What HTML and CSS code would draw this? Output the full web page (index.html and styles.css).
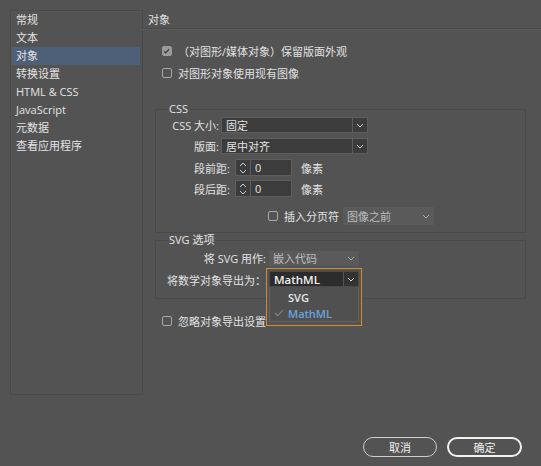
FILE: index.html
```html
<!DOCTYPE html>
<html lang="zh-CN">
<head>
<meta charset="utf-8">
<title>导出选项</title>
<link rel="stylesheet" href="styles.css">
</head>
<body>
<div class="dialog">
  <div class="main">
    <nav class="sidebar">
      <div class="nav-item">常规</div>
      <div class="nav-item">文本</div>
      <div class="nav-item active">对象</div>
      <div class="nav-item">转换设置</div>
      <div class="nav-item">HTML &amp; CSS</div>
      <div class="nav-item">JavaScript</div>
      <div class="nav-item">元数据</div>
      <div class="nav-item">查看应用程序</div>
    </nav>
    <section class="content">
      <div class="title">对象</div>
      <div class="checks">
        <label class="check"><span class="box checked"><svg viewBox="0 0 10 10" width="10" height="10"><path d="M2.3 5.2 L4.2 7.1 L7.8 2.9" fill="none" stroke="#3a3a3a" stroke-width="1.4"/></svg></span>（对图形/媒体对象）保留版面外观</label>
        <label class="check"><span class="box"></span>对图形对象使用现有图像</label>
      </div>

      <fieldset class="group css-group">
        <legend>CSS</legend>
        <div class="row r-select">
          <span class="lbl w1">CSS 大小:</span>
          <div class="select dark wide"><span class="val">固定</span><span class="chev"><svg viewBox="0 0 8 5" width="8" height="5"><path d="M1 1 L4 4 L7 1" fill="none" stroke="#cfcfcf" stroke-width="1"/></svg></span></div>
        </div>
        <div class="row r-select">
          <span class="lbl w1">版面:</span>
          <div class="select dark wide"><span class="val">居中对齐</span><span class="chev"><svg viewBox="0 0 8 5" width="8" height="5"><path d="M1 1 L4 4 L7 1" fill="none" stroke="#cfcfcf" stroke-width="1"/></svg></span></div>
        </div>
        <div class="row r-spin">
          <span class="lbl w2">段前距:</span>
          <div class="spinner"><span class="arrows"><svg viewBox="0 0 10 14" width="10" height="14"><path d="M2 5 L5 2 L8 5 M2 9 L5 12 L8 9" fill="none" stroke="#cfcfcf" stroke-width="1"/></svg></span><span class="num">0</span></div>
          <span class="unit">像素</span>
        </div>
        <div class="row r-spin">
          <span class="lbl w2">段后距:</span>
          <div class="spinner"><span class="arrows"><svg viewBox="0 0 10 14" width="10" height="14"><path d="M2 5 L5 2 L8 5 M2 9 L5 12 L8 9" fill="none" stroke="#cfcfcf" stroke-width="1"/></svg></span><span class="num">0</span></div>
          <span class="unit">像素</span>
        </div>
        <div class="row r-break">
          <label class="check"><span class="box"></span>插入分页符</label>
          <div class="select flat break-sel"><span class="val">图像之前</span><span class="chev"><svg viewBox="0 0 8 5" width="8" height="5"><path d="M1 1 L4 4 L7 1" fill="none" stroke="#a8a8a8" stroke-width="1"/></svg></span></div>
        </div>
      </fieldset>

      <fieldset class="group svg-group">
        <legend>SVG 选项</legend>
        <div class="row r-svg">
          <span class="lbl w3">将 SVG 用作:</span>
          <div class="select flat svg-sel"><span class="val">嵌入代码</span><span class="chev"><svg viewBox="0 0 8 5" width="8" height="5"><path d="M1 1 L4 4 L7 1" fill="none" stroke="#a8a8a8" stroke-width="1"/></svg></span></div>
        </div>
        <div class="row r-math">
          <span class="lbl w3">将数学对象导出为：</span>
          <div class="popup">
            <div class="select math"><span class="val">MathML</span><span class="chev"><svg viewBox="0 0 8 5" width="8" height="5"><path d="M1 1 L4 4 L7 1" fill="none" stroke="#dcdcdc" stroke-width="1"/></svg></span></div>
            <ul class="menu">
              <li class="opt"><span class="tick"></span>SVG</li>
              <li class="opt sel"><span class="tick"><svg viewBox="0 0 10 8" width="10" height="8"><path d="M1 4 L3.8 6.8 L9 1" fill="none" stroke="#8a8a8a" stroke-width="1.1"/></svg></span>MathML</li>
            </ul>
          </div>
        </div>
      </fieldset>

      <div class="checks ignore">
        <label class="check"><span class="box"></span>忽略对象导出设置</label>
      </div>
    </section>
  </div>
  <div class="buttons">
    <button class="btn">取消</button>
    <button class="btn primary">确定</button>
  </div>
</div>
</body>
</html>
```

FILE: styles.css
```css
* { box-sizing: border-box; }
html, body { margin: 0; padding: 0; }
body {
  width: 541px;
  height: 466px;
  background: #535353;
  color: #e2e2e2;
  font-family: "Open Sans", "Noto Sans CJK SC", sans-serif;
  font-size: 11px;
  overflow: hidden;
}
.dialog {
  display: flex;
  flex-direction: column;
  height: 466px;
}
.main {
  display: flex;
  align-items: flex-start;
  padding: 10px 0 0 10px;
}
.sidebar {
  width: 133px;
  height: 385px;
  border: 1px solid #4a4a4a;
  box-shadow: inset 1px 1px 0 #575757;
  padding: 0 2px 0 1px;
}
.nav-item {
  height: 18px;
  line-height: 18px;
  padding-left: 4px;
  color: #e4e4e4;
  white-space: nowrap;
}
.nav-item.active { background: #4e6077; }
.content {
  flex: 1;
  display: flex;
  flex-direction: column;
  margin-left: -2px;
}
.title {
  height: 19px;
  line-height: 19px;
  padding-left: 7px;
  border-bottom: 1px solid #4a4a4a;
  box-shadow: 0 1px 0 #5a5a5a;
}
.checks {
  display: flex;
  flex-direction: column;
  gap: 4px;
  padding: 13px 0 0 21px;
}
.check {
  display: flex;
  align-items: center;
  height: 18px;
  white-space: nowrap;
}
.box {
  width: 10px;
  height: 10px;
  border: 1px solid #a9a9a9;
  border-radius: 2px;
  margin-right: 6px;
  display: inline-flex;
  flex: none;
}
.box.checked {
  background: #9a9a9a;
  border-color: #9a9a9a;
}
.box.checked svg { margin: -1px 0 0 -1px; }

.group {
  margin: 0 15px 0 14px;
  padding: 0;
  border: 1px solid #4a4a4a;
  min-width: 0;
}
.group legend {
  padding: 0 2px;
  margin-left: 11px;
  line-height: 14px;
  color: #e4e4e4;
}
.css-group {
  margin-top: 20px;
  height: 131px;
  padding: 1px 0 0 0;
}
.row {
  display: flex;
  align-items: center;
  white-space: nowrap;
}
.lbl { text-align: right; flex: none; }
.w1 { width: 63px; margin-right: 2px; }
.w2 { width: 74px; margin-right: 5px; }
.w3 { width: 110px; margin-right: 3px; }

.r-select { height: 16px; margin-bottom: 5px; }
.select {
  display: flex;
  align-items: center;
  height: 16px;
}
.select .val { flex: 1; padding-left: 4px; }
.select .chev {
  width: 15px;
  height: 100%;
  display: flex;
  align-items: center;
  justify-content: center;
}
.select.dark {
  background: #3c3c3c;
  border: 1px solid #5e5e5e;
}
.select.dark .chev { border-left: 1px solid #5e5e5e; }
.wide { width: 147px; }

.r-spin { height: 17px; margin-bottom: 4px; }
.spinner {
  display: flex;
  width: 57px;
  height: 17px;
  border: 1px solid #5e5e5e;
  background: #3c3c3c;
}
.spinner .arrows {
  width: 15px;
  border-right: 1px solid #5e5e5e;
  display: flex;
  align-items: center;
  justify-content: center;
}
.spinner .num { padding-left: 4px; line-height: 15px; }
.unit { margin-left: 9px; }

.r-break { height: 18px; margin-top: 10px; padding-left: 112px; }
.r-break .check { margin-right: 4px; }
.flat {
  background: #5a5a5a;
  color: #bdbdbd;
}
.flat .chev { width: 16px; }
.break-sel { width: 91px; height: 18px; }

.svg-group {
  margin-top: 0;
  height: 66px;
  padding: 3px 0 0 0;
}
.r-svg { height: 16px; margin-bottom: 6px; }
.svg-sel { width: 90px; height: 15px; }
.r-math { height: 16px; position: relative; }
.popup {
  position: absolute;
  left: 110px;
  top: -4px;
  width: 96px;
  height: 58px;
  border: 1.5px solid #d38b2f;
  background: #535353;
  padding: 2px;
  z-index: 2;
}
.select.math {
  background: #2c2c2c;
  border: 1px solid #4a4a4a;
  color: #f2f2f2;
  font-weight: 600;
  font-size: 11.5px;
}
.select.math .chev { border-left: 1px solid #555; background: #333; }
.menu {
  list-style: none;
  margin: 0;
  padding: 2px 0 0 0;
  border: 1px solid #626262;
  border-top: none;
  background: #505050;
  height: 35px;
}
.opt {
  display: flex;
  align-items: center;
  height: 16px;
  color: #e6e6e6;
  font-weight: 600;
}
.opt .tick {
  width: 18px;
  display: flex;
  justify-content: center;
}
.opt.sel { color: #6aa4dc; }

.ignore { padding-top: 13px; }

.buttons {
  margin-top: auto;
  display: flex;
  justify-content: flex-end;
  gap: 10px;
  padding: 0 19px 9px 0;
}
.btn {
  width: 74px;
  height: 20px;
  border-radius: 10px;
  border: 1px solid #cfcfcf;
  background: transparent;
  color: #f0f0f0;
  font-family: "Open Sans", "Noto Sans CJK SC", sans-serif;
  font-size: 11px;
  padding: 0;
}
.btn.primary {
  width: 75px;
  border: 2px solid #f2f2f2;
}
```
